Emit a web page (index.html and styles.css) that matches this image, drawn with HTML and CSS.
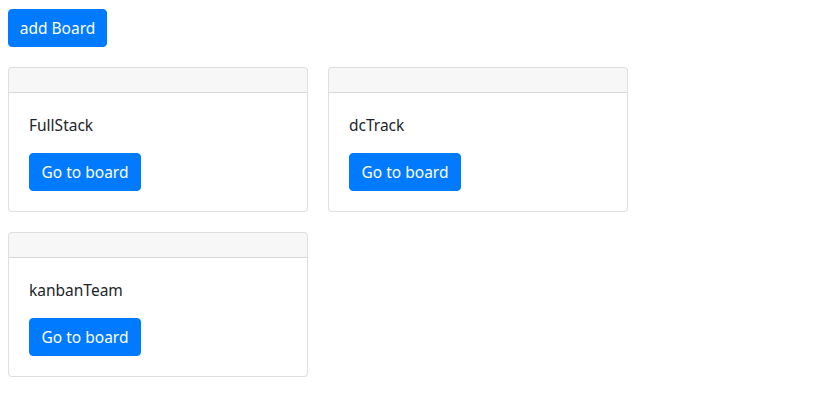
FILE: index.html
```html
<!DOCTYPE html>
<html>
<head>
<meta charset="utf-8">
<link rel="stylesheet" href="styles.css">
</head>
<body>
<div class="page">
  <button class="btn btn-primary add-btn">add Board</button>
  <div class="boards">
    <div class="card">
      <div class="card-header"></div>
      <div class="card-body">
        <p class="card-text">FullStack</p>
        <button class="btn btn-primary">Go to board</button>
      </div>
    </div>
    <div class="card">
      <div class="card-header"></div>
      <div class="card-body">
        <p class="card-text">dcTrack</p>
        <button class="btn btn-primary">Go to board</button>
      </div>
    </div>
    <div class="card">
      <div class="card-header"></div>
      <div class="card-body">
        <p class="card-text">kanbanTeam</p>
        <button class="btn btn-primary">Go to board</button>
      </div>
    </div>
  </div>
</div>
</body>
</html>
```

FILE: styles.css
```css
* { box-sizing: border-box; }
body {
  margin: 0;
  font-family: "Segoe UI", "Noto Sans", "Open Sans", sans-serif;
  font-size: 15.5px;
  line-height: 1.5;
  color: #212529;
  background: #fff;
}
.page {
  padding: 9px 8px 8px 8px;
  display: flex;
  flex-direction: column;
  align-items: flex-start;
  gap: 20px;
}
.btn {
  display: inline-block;
  font-family: inherit;
  font-size: 15.5px;
  line-height: 24px;
  padding: 6px 12px;
  border: 1px solid transparent;
  border-radius: 4px;
  cursor: pointer;
  height: 38px;
}
.btn-primary {
  color: #fff;
  background: #007bff;
  border-color: #007bff;
}
.add-btn { width: 99px; white-space: nowrap; padding: 6px 0; }
.boards {
  display: grid;
  grid-template-columns: repeat(2, 300px);
  gap: 20px;
}
.card {
  border: 1px solid rgba(0,0,0,.125);
  border-radius: 4px;
  background: #fff;
  height: 145px;
  overflow: hidden;
}
.card-header {
  height: 25px;
  background: rgba(0,0,0,.03);
  border-bottom: 1px solid rgba(0,0,0,.125);
}
.card-body {
  padding: 20px;
  display: flex;
  flex-direction: column;
  align-items: flex-start;
}
.card-text {
  margin: 0 0 16px 0;
  line-height: 24px;
}
.card-body .btn { width: 112px; padding: 6px 0; white-space: nowrap; }
```
